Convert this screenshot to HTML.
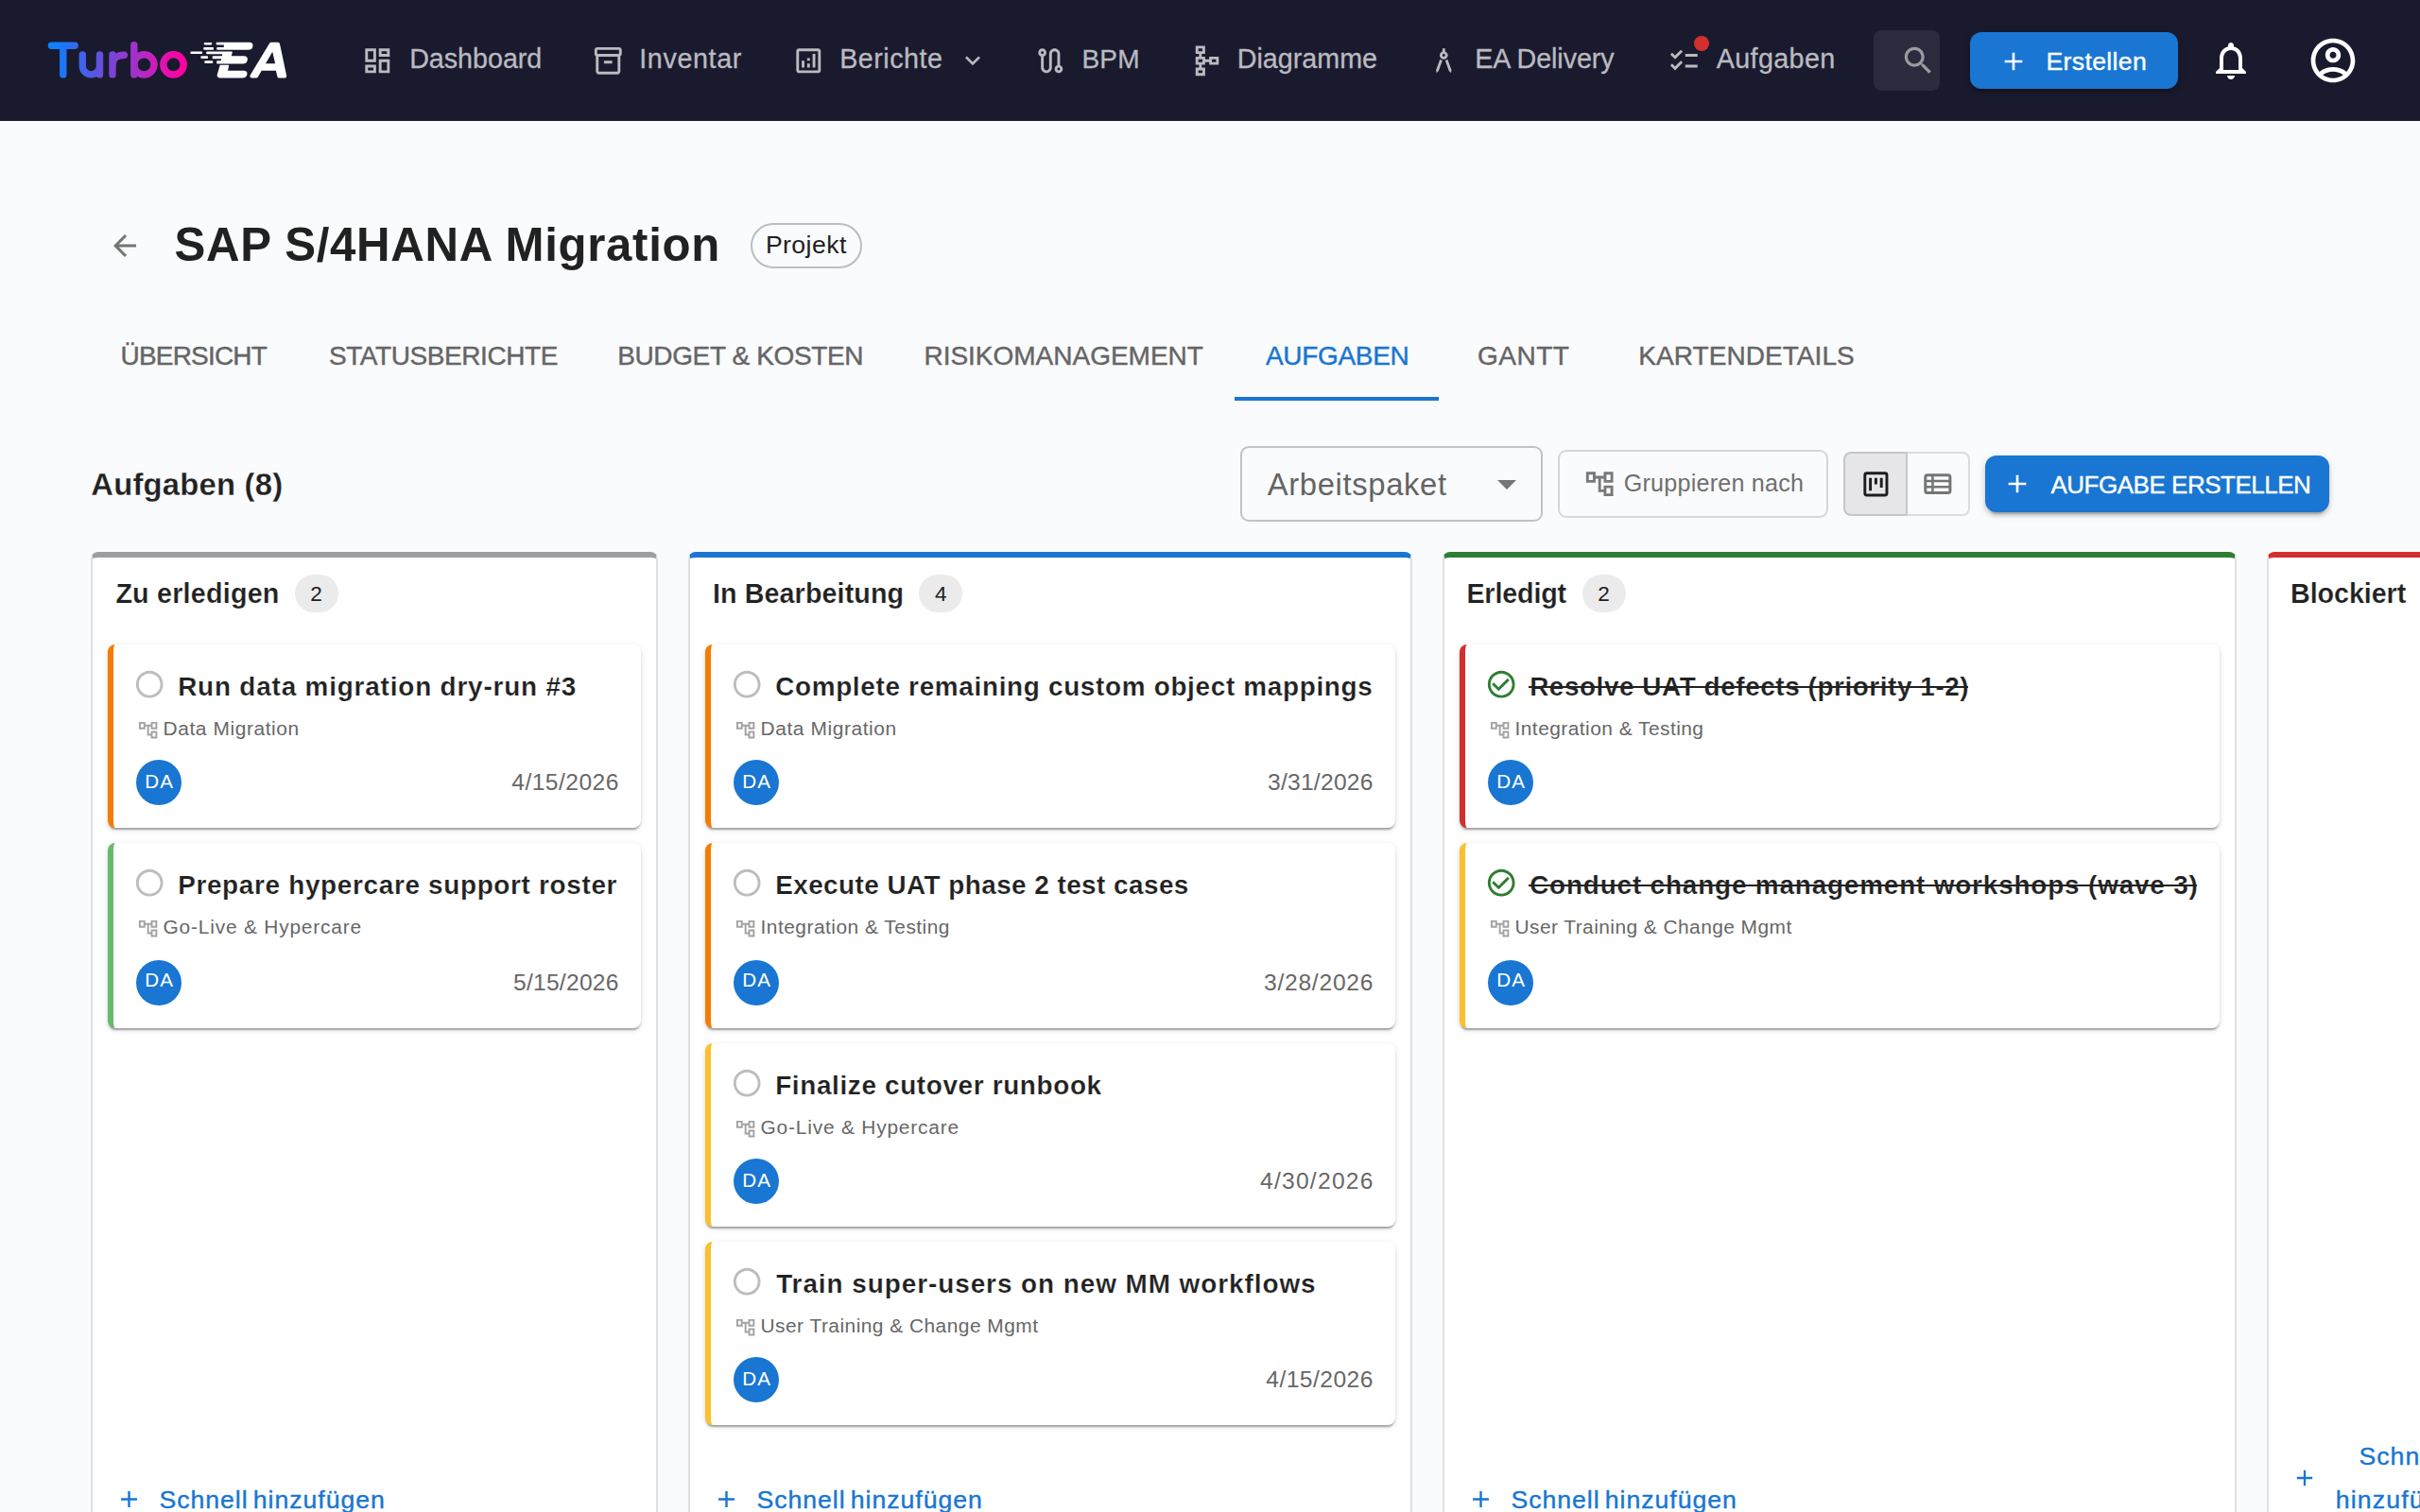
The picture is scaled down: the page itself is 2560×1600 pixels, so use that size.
<!DOCTYPE html>
<html lang="de"><head><meta charset="utf-8"><title>SAP S/4HANA Migration – Aufgaben</title>
<style>
*{box-sizing:border-box;margin:0;padding:0}
html,body{width:2560px;height:1600px;overflow:hidden;background:#fafbfc}
@media (max-width:1400px){html{zoom:.5}}
body{font-family:"Liberation Sans",sans-serif;position:relative;-webkit-font-smoothing:antialiased}
h1,h2,h3{font-size:inherit;font-weight:inherit;display:contents}
main,section,nav.tabs{display:contents}
.t{position:absolute;white-space:pre;line-height:1;display:block}
.ic{position:absolute;display:block;overflow:visible}
.nav{position:absolute;left:0;top:0;width:2560px;height:128px;background:#1a1a2e}
.logo{position:absolute;left:40px;top:30px}
.dot{position:absolute;left:1792px;top:38px;width:16px;height:16px;border-radius:50%;background:#d32f2f}
.search{position:absolute;left:1982px;top:32px;width:70px;height:64px;border-radius:8px;background:#2b2b3d}
.btn-create{position:absolute;left:2084px;top:34px;width:220px;height:60px;border-radius:12px;background:#1976d2;box-shadow:0 6px 2px -4px rgba(0,0,0,.2),0 4px 4px 0 rgba(0,0,0,.14),0 2px 10px 0 rgba(0,0,0,.12)}
.chip{position:absolute;left:794px;top:236px;width:118px;height:48px;border-radius:24px;border:2px solid #bdbdbd}
.indicator{position:absolute;left:1306px;top:420px;width:216px;height:4px;background:#1976d2}
.select{position:absolute;left:1312px;top:472px;width:320px;height:80px;border:2px solid #c2c2c3;border-radius:9px}
.btn-group{position:absolute;left:1648px;top:476px;width:286px;height:72px;border:2px solid #d6d6d7;border-radius:9px}
.toggle{position:absolute;left:1950px;top:478px;width:134px;height:68px}
.tg1{position:absolute;left:0;top:0;width:68px;height:68px;border:2px solid #c6c6c8;border-radius:8px 0 0 8px;background:#e6e6e8}
.tg2{position:absolute;left:66px;top:0;width:68px;height:68px;border:2px solid #dcdcdd;border-left-color:#c6c6c8;border-radius:0 8px 8px 0}
.btn-add{position:absolute;left:2100px;top:482px;width:364px;height:60px;border-radius:12px;background:#1976d2;box-shadow:0 6px 2px -4px rgba(0,0,0,.2),0 4px 4px 0 rgba(0,0,0,.14),0 2px 10px 0 rgba(0,0,0,.12)}
.col{position:absolute;top:584px;height:1100px;background:#fff;border:2px solid #e0e0e0;border-top-width:6px;border-top-style:solid;border-radius:8px}
.badge{position:absolute;top:608px;width:46px;height:40px;border-radius:20px;background:#ebebeb}
.card{position:absolute;background:#fff;border-left:6px solid;border-radius:8px;box-sizing:content-box;box-shadow:0 4px 2px -2px rgba(0,0,0,.2),0 2px 2px 0 rgba(0,0,0,.14),0 2px 6px 0 rgba(0,0,0,.12)}
.strike{position:absolute;height:2px;background:#212121}
.avatar{position:absolute;width:48px;height:48px;border-radius:50%;background:#1976d2}
</style></head>
<body>
<header class="nav">
<svg class="logo" viewBox="40 30 280 70" width="280" height="70">
<defs><linearGradient id="lg" gradientUnits="userSpaceOnUse" x1="52" y1="0" x2="198" y2="0">
<stop offset="0" stop-color="#0a84ff"/><stop offset=".12" stop-color="#1f74f6"/><stop offset=".45" stop-color="#7a44d6"/><stop offset=".68" stop-color="#b22ac4"/><stop offset=".9" stop-color="#f408a8"/><stop offset="1" stop-color="#ff009c"/></linearGradient></defs>
<g fill="none" stroke="url(#lg)" stroke-width="7.4" stroke-linecap="round" stroke-linejoin="round">
<path d="M54.4 48.3H79.2M66.8 48.3V78.9"/>
<path d="M87.3 57.9V69.8a9.1 9.1 0 0 0 18.2 0V57.9M105.5 57.9V78.9"/>
<path d="M119 57.9V78.9M119 69.5C119 62 123.5 58.3 131.4 58.3"/>
<path d="M141.8 47.7V78.9"/><circle cx="152.4" cy="68.35" r="10.6"/>
<circle cx="183.5" cy="68.35" r="10.7"/>
</g>
<g fill="#fff" stroke="#fff" stroke-width="1.6" stroke-linejoin="round" stroke-linecap="round">
<!-- E -->
<path d="M238 45.5H263.5Q267.2 45.5 266.6 48.8Q266 52 262.6 52H230V50.7H237.6V46.8H229.5V45.5Z"/>
<path d="M219 55.4H245L243.6 60.1H258Q261.6 60.1 261 63.4Q260.4 66.7 257 66.7H230V65.1H234.5L235 61.4H225.5V60.1H235.6L236 56.4H219Z"/>
<path d="M233.4 69.5H241.4L240 75.5H257.5Q261.2 75.5 260.6 78.7Q260 81.8 256.5 81.8H233Q230 81.8 230.6 78.9Z"/>
<!-- dashes -->
<path d="M216.6 45.7H223.4V46.6H216.6ZM216.1 50.7H225.2V52H216.1ZM202.2 55.4H213.3V56.3H202.2ZM213.2 60.1H219.2V61.2H213.2ZM217.1 65.1H224.4V66.2H217.1Z"/>
</g>
<!-- A -->
<path fill="#fff" stroke="#fff" stroke-width="4" stroke-linejoin="round" fill-rule="evenodd" d="M286.85 46.7H294L301.2 80.6H295.3L293.5 72.7H275.6L271.1 80.6H266.4ZM289 49.5L277.5 69.2H293.7Z"/>
</svg>
<svg class="ic" style="left:381.70px;top:46.60px;width:34.6px;height:34.6px;fill:#babac0;" viewBox="0 0 24 24"><path d="M19 5v2h-4V5h4M9 5v6H5V5h4m10 8v6h-4v-6h4M9 17v2H5v-2h4M21 3h-8v6h8V3zM11 3H3v10h8V3zm10 8h-8v10h8V11zm-10 4H3v6h8v-6z"/></svg>
<span class="t" style="left:433.15px;top:48.00px;font-size:28.7px;font-weight:400;color:#babac0;letter-spacing:-0.023px;-webkit-text-stroke:0.3px #babac0;">Dashboard</span>
<svg class="ic" style="left:625.70px;top:46.60px;width:34.6px;height:34.6px;fill:#babac0;" viewBox="0 0 24 24"><path d="M20 2H4c-1 0-2 .9-2 2v3.01c0 .72.43 1.34 1 1.69V20c0 1.1 1.1 2 2 2h14c.9 0 2-.9 2-2V8.7c.57-.35 1-.97 1-1.69V4c0-1.1-1-2-2-2zm-1 18H5V9h14v11zm1-13H4V4h16v3zM9 12h6v2H9z"/></svg>
<span class="t" style="left:676.15px;top:48.00px;font-size:28.7px;font-weight:400;color:#babac0;letter-spacing:0.657px;-webkit-text-stroke:0.3px #babac0;">Inventar</span>
<svg class="ic" style="left:837.70px;top:46.60px;width:34.6px;height:34.6px;fill:#babac0;" viewBox="0 0 24 24"><path d="M19 3H5c-1.1 0-2 .9-2 2v14c0 1.1.9 2 2 2h14c1.1 0 2-.9 2-2V5c0-1.1-.9-2-2-2zm0 16H5V5h14v14zM7 12h2v5H7zm8-5h2v10h-2zm-4 7h2v3h-2zm0-4h2v2h-2z"/></svg>
<span class="t" style="left:888.15px;top:48.00px;font-size:28.7px;font-weight:400;color:#babac0;letter-spacing:0.524px;-webkit-text-stroke:0.3px #babac0;">Berichte</span>
<svg class="ic" style="left:1093.90px;top:46.60px;width:34.6px;height:34.6px;fill:#babac0;" viewBox="0 0 24 24"><path d="M19 15.18V7c0-2.21-1.79-4-4-4s-4 1.79-4 4v10c0 1.1-.9 2-2 2s-2-.9-2-2V8.82C8.16 8.4 9 7.3 9 6c0-1.66-1.34-3-3-3S3 4.34 3 6c0 1.3.84 2.4 2 2.82V17c0 2.21 1.79 4 4 4s4-1.79 4-4V7c0-1.1.9-2 2-2s2 .9 2 2v8.18c-1.16.41-2 1.51-2 2.82 0 1.66 1.34 3 3 3s3-1.34 3-3c0-1.3-.84-2.4-2-2.82zM6 7c-.55 0-1-.45-1-1s.45-1 1-1 1 .45 1 1-.45 1-1 1zm12 12c-.55 0-1-.45-1-1s.45-1 1-1 1 .45 1 1-.45 1-1 1z"/></svg>
<span class="t" style="left:1144.40px;top:49.00px;font-size:28.0px;font-weight:400;color:#babac0;letter-spacing:0.299px;-webkit-text-stroke:0.3px #babac0;">BPM</span>
<svg class="ic" style="left:1258.70px;top:46.60px;width:34.6px;height:34.6px;fill:#babac0;" viewBox="0 0 24 24"><path d="M14 9v2h-3V9H8.5V7H11V1H4v6h2.5v2H4v6h2.5v2H4v6h7v-6H8.5v-2H11v-2h3v2h7V9h-7zM6 3h3v2H6V3zm3 18H6v-2h3v2zm0-8H6v-2h3v2zm10 0h-3v-2h3v2z"/></svg>
<span class="t" style="left:1308.65px;top:48.00px;font-size:28.7px;font-weight:400;color:#babac0;letter-spacing:0.019px;-webkit-text-stroke:0.3px #babac0;">Diagramme</span>
<svg class="ic" style="left:1509.90px;top:46.60px;width:34.6px;height:34.6px;fill:#babac0;" viewBox="0 0 24 24"><path d="M6.36 18.78L6.61 21l1.62-1.54 2.77-7.6c-.68-.17-1.28-.51-1.77-.98l-2.87 7.9zm8.41-7.9c-.49.47-1.1.81-1.77.98l2.77 7.6L17.39 21l.26-2.22-2.88-7.9zM15 8c0-1.3-.84-2.4-2-2.82V3h-2v2.18C9.84 5.6 9 6.7 9 8c0 1.66 1.34 3 3 3s3-1.34 3-3zm-3 1c-.55 0-1-.45-1-1s.45-1 1-1 1 .45 1 1-.45 1-1 1z"/></svg>
<span class="t" style="left:1560.15px;top:48.00px;font-size:28.7px;font-weight:400;color:#babac0;letter-spacing:-0.081px;-webkit-text-stroke:0.3px #babac0;">EA Delivery</span>
<svg class="ic" style="left:1764.20px;top:46.60px;width:34.6px;height:34.6px;fill:#babac0;" viewBox="0 0 24 24"><path d="M22 7h-9v2h9V7zm0 8h-9v2h9v-2zM5.54 11L2 7.46l1.41-1.41 2.12 2.12 4.24-4.24 1.41 1.41L5.54 11zm0 8L2 15.46l1.41-1.41 2.12 2.12 4.24-4.24 1.41 1.41L5.54 19z"/></svg>
<span class="t" style="left:1815.65px;top:48.00px;font-size:28.7px;font-weight:400;color:#babac0;letter-spacing:0.403px;-webkit-text-stroke:0.3px #babac0;">Aufgaben</span>
<svg class="ic" style="left:1013.40px;top:48.00px;width:32px;height:32px;fill:#babac0;" viewBox="0 0 24 24"><path d="M16.59 8.59L12 13.17 7.41 8.59 6 10l6 6 6-6z"/></svg>
<div class="dot"></div>
<div class="search"></div>
<svg class="ic" style="left:2010.05px;top:44.55px;width:38.5px;height:38.5px;fill:#9a9aa0;" viewBox="0 0 24 24"><path d="M15.5 14h-.79l-.28-.27C15.41 12.59 16 11.11 16 9.5 16 5.91 13.09 3 9.5 3S3 5.91 3 9.5 5.91 16 9.5 16c1.61 0 3.09-.59 4.23-1.57l.27.28v.79l5 4.99L20.49 19l-4.99-5zm-6 0C7.01 14 5 11.99 5 9.5S7.01 5 9.5 5 14 7.01 14 9.5 11.99 14 9.5 14z"/></svg>
<div class="btn-create"></div>
<svg class="ic" style="left:2114.00px;top:48.60px;width:32px;height:32px;fill:#fff;" viewBox="0 0 24 24"><path d="M19 13h-6v6h-2v-6H5v-2h6V5h2v6h6v2z"/></svg>
<span class="t" style="left:2164.39px;top:52.00px;font-size:26.65px;font-weight:400;color:#fff;letter-spacing:0.347px;-webkit-text-stroke:0.39px #fff;">Erstellen</span>
<svg class="ic" style="left:2336.00px;top:40.00px;width:48px;height:48px;fill:#fff;" viewBox="0 0 24 24"><path d="M12 22c1.1 0 2-.9 2-2h-4c0 1.1.9 2 2 2zm6-6v-5c0-3.07-1.63-5.64-4.5-6.32V4c0-.83-.67-1.5-1.5-1.5s-1.5.67-1.5 1.5v.68C7.64 5.36 6 7.92 6 11v5l-2 2v1h16v-1l-2-2zm-2 1H8v-6c0-2.48 1.51-4.5 4-4.5s4 2.02 4 4.5v6z"/></svg>
<svg class="ic" style="left:2440.00px;top:36.00px;width:56px;height:56px;fill:#fff;" viewBox="0 0 24 24"><path d="M12 2C6.48 2 2 6.48 2 12s4.48 10 10 10 10-4.48 10-10S17.52 2 12 2zM7.35 18.5C8.66 17.56 10.26 17 12 17s3.34.56 4.65 1.5c-1.31.94-2.91 1.5-4.65 1.5s-3.34-.56-4.65-1.5zm10.79-1.38C16.45 15.8 14.32 15 12 15s-4.45.8-6.14 2.12C4.7 15.73 4 13.95 4 12c0-4.42 3.58-8 8-8s8 3.58 8 8c0 1.95-.7 3.73-1.86 5.12zM12 6c-1.93 0-3.5 1.57-3.5 3.5S10.07 13 12 13s3.5-1.57 3.5-3.5S13.93 6 12 6zm0 5c-.83 0-1.5-.67-1.5-1.5S11.17 8 12 8s1.5.67 1.5 1.5S12.83 11 12 11z"/></svg>
</header>
<main>
<svg class="ic" style="left:114.00px;top:242.00px;width:36px;height:36px;fill:#757575;" viewBox="0 0 24 24"><path d="M20 11H7.83l5.59-5.59L12 4l-8 8 8 8 1.41-1.41L7.83 13H20v-2z"/></svg>
<h1><span class="t" style="left:184.50px;top:234.00px;font-size:49.2px;font-weight:700;color:#212121;letter-spacing:0.692px;">SAP S/4HANA Migration</span></h1>
<div class="chip"></div>
<span class="t" style="left:809.90px;top:246.00px;font-size:26.65px;font-weight:400;color:#212121;letter-spacing:0.415px;">Projekt</span>
<nav class="tabs">
<span class="t" style="left:127.46px;top:363.00px;font-size:28.0px;font-weight:400;color:#656566;letter-spacing:-0.795px;-webkit-text-stroke:0.42px #656566;">ÜBERSICHT</span>
<span class="t" style="left:347.96px;top:363.00px;font-size:28.0px;font-weight:400;color:#656566;letter-spacing:-0.413px;-webkit-text-stroke:0.42px #656566;">STATUSBERICHTE</span>
<span class="t" style="left:653.21px;top:363.00px;font-size:28.0px;font-weight:400;color:#656566;letter-spacing:-0.374px;-webkit-text-stroke:0.42px #656566;">BUDGET &amp; KOSTEN</span>
<span class="t" style="left:977.46px;top:363.00px;font-size:28.0px;font-weight:400;color:#656566;letter-spacing:-0.010px;-webkit-text-stroke:0.42px #656566;">RISIKOMANAGEMENT</span>
<span class="t" style="left:1338.96px;top:363.00px;font-size:28.0px;font-weight:400;color:#1976d2;letter-spacing:-0.318px;-webkit-text-stroke:0.42px #1976d2;">AUFGABEN</span>
<span class="t" style="left:1562.96px;top:363.00px;font-size:28.0px;font-weight:400;color:#656566;letter-spacing:0.513px;-webkit-text-stroke:0.42px #656566;">GANTT</span>
<span class="t" style="left:1733.21px;top:363.00px;font-size:28.0px;font-weight:400;color:#656566;letter-spacing:0.068px;-webkit-text-stroke:0.42px #656566;">KARTENDETAILS</span>
<div class="indicator"></div></nav>
<section class="toolbar">
<h2><span class="t" style="left:96.27px;top:497.00px;font-size:32.8px;font-weight:700;color:#212121;letter-spacing:0.215px;-webkit-text-stroke:0.26px #fafbfc;">Aufgaben (8)</span></h2>
<div class="select"></div>
<span class="t" style="left:1340.70px;top:497.00px;font-size:32.8px;font-weight:400;color:#646465;letter-spacing:0.646px;">Arbeitspaket</span>
<svg class="ic" style="left:1583.7px;top:508px;width:20px;height:10px;fill:#757575" viewBox="0 0 20 10"><path d="M0 0h20L10 10z"/></svg>
<div class="btn-group"></div>
<svg class="ic" style="left:1674.60px;top:494.80px;width:34.4px;height:34.4px;fill:#787878;" viewBox="0 0 24 24"><path d="M22 11V3h-7v3H9V3H2v8h7V8h2v10h4v3h7v-8h-7v3h-2V8h2v3h7zM7 9H4V5h3v4zm10 6h3v4h-3v-4zm0-10h3v4h-3V5z"/></svg>
<span class="t" style="left:1717.75px;top:499.00px;font-size:25.11px;font-weight:400;color:#6f6f70;letter-spacing:0.226px;">Gruppieren nach</span>
<div class="toggle"><div class="tg1"></div><div class="tg2"></div></div>
<svg class="ic" style="left:1966.6px;top:494.6px;width:34.8px;height:34.8px" viewBox="0 0 24 24"><rect x="4" y="4" width="16" height="16" rx="1.4" fill="none" stroke="#1c1c1c" stroke-width="2"/><path fill="#1c1c1c" d="M7 7.4h2v9.4H7zM11 7.4h2v4.6h-2zM15 7.4h2v7h-2z"/></svg>
<svg class="ic" style="left:2032px;top:494px;width:36px;height:36px" viewBox="0 0 24 24"><rect x="3.2" y="5.8" width="17.4" height="12.6" rx="1.4" fill="none" stroke="#757575" stroke-width="2"/><path fill="none" stroke="#757575" stroke-width="1.7" d="M3 10H21M3 14.2H21M8.3 5.5V18.7"/></svg>
<div class="btn-add"></div>
<svg class="ic" style="left:2118.40px;top:496.30px;width:32px;height:32px;fill:#fff;" viewBox="0 0 24 24"><path d="M19 13h-6v6h-2v-6H5v-2h6V5h2v6h6v2z"/></svg>
<span class="t" style="left:2169.45px;top:500.00px;font-size:26.0px;font-weight:400;color:#fff;letter-spacing:-0.485px;-webkit-text-stroke:0.39px #fff;">AUFGABE ERSTELLEN</span>
</section>
<section class="board">
<div class="col" style="left:96px;width:600px;border-top-color:#9e9e9e"></div>
<h3><span class="t" style="left:122.39px;top:614.00px;font-size:28.7px;font-weight:700;color:#212121;letter-spacing:0.222px;-webkit-text-stroke:0.22px #fff;">Zu erledigen</span></h3>
<div class="badge" style="left:312px"></div>
<span class="t" style="left:328.20px;top:618.00px;font-size:22.55px;font-weight:400;color:#212121;letter-spacing:0.800px;">2</span>
<article class="card" style="left:114px;top:682px;width:558px;height:194px;border-left-color:#f57c00"></article>
<svg class="ic" style="left:140.80px;top:706.70px;width:34.4px;height:34.4px;fill:#bdbdbd;" viewBox="0 0 24 24"><path d="M12 2C6.48 2 2 6.48 2 12s4.48 10 10 10 10-4.48 10-10S17.52 2 12 2zm0 18c-4.42 0-8-3.58-8-8s3.58-8 8-8 8 3.58 8 8-3.58 8-8 8z"/></svg>
<span class="t" style="left:188.14px;top:713.00px;font-size:27.88px;font-weight:700;color:#212121;letter-spacing:0.828px;-webkit-text-stroke:0.22px #fff;">Run data migration dry-run #3</span>
<svg class="ic" style="left:144.85px;top:760.65px;width:23.3px;height:23.3px;fill:#a3a3a3;" viewBox="0 0 24 24"><path d="M22 11V3h-7v3H9V3H2v8h7V8h2v10h4v3h7v-8h-7v3h-2V8h2v3h7zM7 9H4V5h3v4zm10 6h3v4h-3v-4zm0-10h3v4h-3V5z"/></svg>
<span class="t" style="left:172.50px;top:761.00px;font-size:20.91px;font-weight:400;color:#676767;letter-spacing:0.590px;">Data Migration</span>
<div class="avatar" style="left:144px;top:804px"></div>
<span class="t" style="left:153.25px;top:817.00px;font-size:20.6px;font-weight:400;color:#fff;letter-spacing:1.128px;">DA</span>
<span class="t" style="left:541.25px;top:816.00px;font-size:24.6px;font-weight:400;color:#676767;letter-spacing:0.471px;">4/15/2026</span>
<article class="card" style="left:114px;top:892px;width:558px;height:196px;border-left-color:#66bb6a"></article>
<svg class="ic" style="left:140.80px;top:916.70px;width:34.4px;height:34.4px;fill:#bdbdbd;" viewBox="0 0 24 24"><path d="M12 2C6.48 2 2 6.48 2 12s4.48 10 10 10 10-4.48 10-10S17.52 2 12 2zm0 18c-4.42 0-8-3.58-8-8s3.58-8 8-8 8 3.58 8 8-3.58 8-8 8z"/></svg>
<span class="t" style="left:188.14px;top:923.00px;font-size:27.88px;font-weight:700;color:#212121;letter-spacing:0.685px;-webkit-text-stroke:0.22px #fff;">Prepare hypercare support roster</span>
<svg class="ic" style="left:144.85px;top:970.65px;width:23.3px;height:23.3px;fill:#a3a3a3;" viewBox="0 0 24 24"><path d="M22 11V3h-7v3H9V3H2v8h7V8h2v10h4v3h7v-8h-7v3h-2V8h2v3h7zM7 9H4V5h3v4zm10 6h3v4h-3v-4zm0-10h3v4h-3V5z"/></svg>
<span class="t" style="left:172.50px;top:971.00px;font-size:20.91px;font-weight:400;color:#676767;letter-spacing:0.802px;">Go-Live &amp; Hypercare</span>
<div class="avatar" style="left:144px;top:1016px"></div>
<span class="t" style="left:153.25px;top:1027.00px;font-size:20.6px;font-weight:400;color:#fff;letter-spacing:1.128px;">DA</span>
<span class="t" style="left:543.00px;top:1028.00px;font-size:24.6px;font-weight:400;color:#676767;letter-spacing:0.252px;">5/15/2026</span>
<svg class="ic" style="left:121.50px;top:1571.50px;width:29px;height:29px;fill:#1976d2;" viewBox="0 0 24 24"><path d="M19 13h-6v6h-2v-6H5v-2h6V5h2v6h6v2z"/></svg>
<span class="t" style="left:168.44px;top:1574.00px;font-size:26.65px;font-weight:400;color:#1976d2;letter-spacing:0.970px;word-spacing:-3.2px;-webkit-text-stroke:0.39px #1976d2;">Schnell hinzufügen</span>
<div class="col" style="left:728px;width:766px;border-top-color:#1976d2"></div>
<h3><span class="t" style="left:753.89px;top:614.00px;font-size:28.7px;font-weight:700;color:#212121;letter-spacing:0.109px;-webkit-text-stroke:0.22px #fff;">In Bearbeitung</span></h3>
<div class="badge" style="left:972px"></div>
<span class="t" style="left:989.10px;top:618.00px;font-size:22.55px;font-weight:400;color:#212121;letter-spacing:-0.200px;">4</span>
<article class="card" style="left:746px;top:682px;width:724px;height:194px;border-left-color:#f57c00"></article>
<svg class="ic" style="left:772.80px;top:706.70px;width:34.4px;height:34.4px;fill:#bdbdbd;" viewBox="0 0 24 24"><path d="M12 2C6.48 2 2 6.48 2 12s4.48 10 10 10 10-4.48 10-10S17.52 2 12 2zm0 18c-4.42 0-8-3.58-8-8s3.58-8 8-8 8 3.58 8 8-3.58 8-8 8z"/></svg>
<span class="t" style="left:820.14px;top:713.00px;font-size:27.88px;font-weight:700;color:#212121;letter-spacing:0.691px;-webkit-text-stroke:0.22px #fff;">Complete remaining custom object mappings</span>
<svg class="ic" style="left:776.85px;top:760.65px;width:23.3px;height:23.3px;fill:#a3a3a3;" viewBox="0 0 24 24"><path d="M22 11V3h-7v3H9V3H2v8h7V8h2v10h4v3h7v-8h-7v3h-2V8h2v3h7zM7 9H4V5h3v4zm10 6h3v4h-3v-4zm0-10h3v4h-3V5z"/></svg>
<span class="t" style="left:804.50px;top:761.00px;font-size:20.91px;font-weight:400;color:#676767;letter-spacing:0.590px;">Data Migration</span>
<div class="avatar" style="left:776px;top:804px"></div>
<span class="t" style="left:785.25px;top:817.00px;font-size:20.6px;font-weight:400;color:#fff;letter-spacing:1.128px;">DA</span>
<span class="t" style="left:1341.00px;top:816.00px;font-size:24.6px;font-weight:400;color:#676767;letter-spacing:0.252px;">3/31/2026</span>
<article class="card" style="left:746px;top:892px;width:724px;height:196px;border-left-color:#f57c00"></article>
<svg class="ic" style="left:772.80px;top:916.70px;width:34.4px;height:34.4px;fill:#bdbdbd;" viewBox="0 0 24 24"><path d="M12 2C6.48 2 2 6.48 2 12s4.48 10 10 10 10-4.48 10-10S17.52 2 12 2zm0 18c-4.42 0-8-3.58-8-8s3.58-8 8-8 8 3.58 8 8-3.58 8-8 8z"/></svg>
<span class="t" style="left:820.14px;top:923.00px;font-size:27.88px;font-weight:700;color:#212121;letter-spacing:0.456px;-webkit-text-stroke:0.22px #fff;">Execute UAT phase 2 test cases</span>
<svg class="ic" style="left:776.85px;top:970.65px;width:23.3px;height:23.3px;fill:#a3a3a3;" viewBox="0 0 24 24"><path d="M22 11V3h-7v3H9V3H2v8h7V8h2v10h4v3h7v-8h-7v3h-2V8h2v3h7zM7 9H4V5h3v4zm10 6h3v4h-3v-4zm0-10h3v4h-3V5z"/></svg>
<span class="t" style="left:804.50px;top:971.00px;font-size:20.91px;font-weight:400;color:#676767;letter-spacing:0.489px;">Integration &amp; Testing</span>
<div class="avatar" style="left:776px;top:1016px"></div>
<span class="t" style="left:785.25px;top:1027.00px;font-size:20.6px;font-weight:400;color:#fff;letter-spacing:1.128px;">DA</span>
<span class="t" style="left:1337.00px;top:1028.00px;font-size:24.6px;font-weight:400;color:#676767;letter-spacing:0.752px;">3/28/2026</span>
<article class="card" style="left:746px;top:1104px;width:724px;height:194px;border-left-color:#fbc02d"></article>
<svg class="ic" style="left:772.80px;top:1128.70px;width:34.4px;height:34.4px;fill:#bdbdbd;" viewBox="0 0 24 24"><path d="M12 2C6.48 2 2 6.48 2 12s4.48 10 10 10 10-4.48 10-10S17.52 2 12 2zm0 18c-4.42 0-8-3.58-8-8s3.58-8 8-8 8 3.58 8 8-3.58 8-8 8z"/></svg>
<span class="t" style="left:820.14px;top:1135.00px;font-size:27.88px;font-weight:700;color:#212121;letter-spacing:0.655px;-webkit-text-stroke:0.22px #fff;">Finalize cutover runbook</span>
<svg class="ic" style="left:776.85px;top:1182.65px;width:23.3px;height:23.3px;fill:#a3a3a3;" viewBox="0 0 24 24"><path d="M22 11V3h-7v3H9V3H2v8h7V8h2v10h4v3h7v-8h-7v3h-2V8h2v3h7zM7 9H4V5h3v4zm10 6h3v4h-3v-4zm0-10h3v4h-3V5z"/></svg>
<span class="t" style="left:804.50px;top:1183.00px;font-size:20.91px;font-weight:400;color:#676767;letter-spacing:0.802px;">Go-Live &amp; Hypercare</span>
<div class="avatar" style="left:776px;top:1226px"></div>
<span class="t" style="left:785.25px;top:1239.00px;font-size:20.6px;font-weight:400;color:#fff;letter-spacing:1.128px;">DA</span>
<span class="t" style="left:1333.00px;top:1238.00px;font-size:24.6px;font-weight:400;color:#676767;letter-spacing:1.252px;">4/30/2026</span>
<article class="card" style="left:746px;top:1314px;width:724px;height:194px;border-left-color:#fbc02d"></article>
<svg class="ic" style="left:772.80px;top:1338.70px;width:34.4px;height:34.4px;fill:#bdbdbd;" viewBox="0 0 24 24"><path d="M12 2C6.48 2 2 6.48 2 12s4.48 10 10 10 10-4.48 10-10S17.52 2 12 2zm0 18c-4.42 0-8-3.58-8-8s3.58-8 8-8 8 3.58 8 8-3.58 8-8 8z"/></svg>
<span class="t" style="left:821.14px;top:1345.00px;font-size:27.88px;font-weight:700;color:#212121;letter-spacing:0.960px;-webkit-text-stroke:0.22px #fff;">Train super-users on new MM workflows</span>
<svg class="ic" style="left:776.85px;top:1392.65px;width:23.3px;height:23.3px;fill:#a3a3a3;" viewBox="0 0 24 24"><path d="M22 11V3h-7v3H9V3H2v8h7V8h2v10h4v3h7v-8h-7v3h-2V8h2v3h7zM7 9H4V5h3v4zm10 6h3v4h-3v-4zm0-10h3v4h-3V5z"/></svg>
<span class="t" style="left:804.50px;top:1393.00px;font-size:20.91px;font-weight:400;color:#676767;letter-spacing:0.471px;">User Training &amp; Change Mgmt</span>
<div class="avatar" style="left:776px;top:1436px"></div>
<span class="t" style="left:785.25px;top:1449.00px;font-size:20.6px;font-weight:400;color:#fff;letter-spacing:1.128px;">DA</span>
<span class="t" style="left:1339.25px;top:1448.00px;font-size:24.6px;font-weight:400;color:#676767;letter-spacing:0.471px;">4/15/2026</span>
<svg class="ic" style="left:753.50px;top:1571.50px;width:29px;height:29px;fill:#1976d2;" viewBox="0 0 24 24"><path d="M19 13h-6v6h-2v-6H5v-2h6V5h2v6h6v2z"/></svg>
<span class="t" style="left:800.45px;top:1574.00px;font-size:26.65px;font-weight:400;color:#1976d2;letter-spacing:0.970px;word-spacing:-3.2px;-webkit-text-stroke:0.39px #1976d2;">Schnell hinzufügen</span>
<div class="col" style="left:1526px;width:840px;border-top-color:#2e7d32"></div>
<h3><span class="t" style="left:1551.39px;top:614.00px;font-size:28.7px;font-weight:700;color:#212121;letter-spacing:-0.146px;-webkit-text-stroke:0.22px #fff;">Erledigt</span></h3>
<div class="badge" style="left:1674px"></div>
<span class="t" style="left:1690.20px;top:618.00px;font-size:22.55px;font-weight:400;color:#212121;letter-spacing:0.800px;">2</span>
<article class="card" style="left:1544px;top:682px;width:798px;height:194px;border-left-color:#d32f2f"></article>
<svg class="ic" style="left:1570.80px;top:706.70px;width:34.4px;height:34.4px;fill:#2e7d32;" viewBox="0 0 24 24"><path d="M16.59 7.58L10 14.17l-3.59-3.58L5 12l5 5 8-8zM12 2C6.48 2 2 6.48 2 12s4.48 10 10 10 10-4.48 10-10S17.52 2 12 2zm0 18c-4.42 0-8-3.58-8-8s3.58-8 8-8 8 3.58 8 8-3.58 8-8 8z"/></svg>
<span class="t" style="left:1618.14px;top:713.00px;font-size:27.88px;font-weight:700;color:#212121;letter-spacing:0.573px;-webkit-text-stroke:0.22px #fff;">Resolve UAT defects (priority 1-2)</span>
<div class="strike" style="left:1617.00px;top:726px;width:465.20px"></div>
<svg class="ic" style="left:1574.85px;top:760.65px;width:23.3px;height:23.3px;fill:#a3a3a3;" viewBox="0 0 24 24"><path d="M22 11V3h-7v3H9V3H2v8h7V8h2v10h4v3h7v-8h-7v3h-2V8h2v3h7zM7 9H4V5h3v4zm10 6h3v4h-3v-4zm0-10h3v4h-3V5z"/></svg>
<span class="t" style="left:1602.50px;top:761.00px;font-size:20.91px;font-weight:400;color:#676767;letter-spacing:0.464px;">Integration &amp; Testing</span>
<div class="avatar" style="left:1574px;top:804px"></div>
<span class="t" style="left:1583.25px;top:817.00px;font-size:20.6px;font-weight:400;color:#fff;letter-spacing:1.128px;">DA</span>
<article class="card" style="left:1544px;top:892px;width:798px;height:196px;border-left-color:#fbc02d"></article>
<svg class="ic" style="left:1570.80px;top:916.70px;width:34.4px;height:34.4px;fill:#2e7d32;" viewBox="0 0 24 24"><path d="M16.59 7.58L10 14.17l-3.59-3.58L5 12l5 5 8-8zM12 2C6.48 2 2 6.48 2 12s4.48 10 10 10 10-4.48 10-10S17.52 2 12 2zm0 18c-4.42 0-8-3.58-8-8s3.58-8 8-8 8 3.58 8 8-3.58 8-8 8z"/></svg>
<span class="t" style="left:1618.14px;top:923.00px;font-size:27.88px;font-weight:700;color:#212121;letter-spacing:0.839px;-webkit-text-stroke:0.22px #fff;">Conduct change management workshops (wave 3)</span>
<div class="strike" style="left:1617.00px;top:936px;width:707.45px"></div>
<svg class="ic" style="left:1574.85px;top:970.65px;width:23.3px;height:23.3px;fill:#a3a3a3;" viewBox="0 0 24 24"><path d="M22 11V3h-7v3H9V3H2v8h7V8h2v10h4v3h7v-8h-7v3h-2V8h2v3h7zM7 9H4V5h3v4zm10 6h3v4h-3v-4zm0-10h3v4h-3V5z"/></svg>
<span class="t" style="left:1602.50px;top:971.00px;font-size:20.91px;font-weight:400;color:#676767;letter-spacing:0.442px;">User Training &amp; Change Mgmt</span>
<div class="avatar" style="left:1574px;top:1016px"></div>
<span class="t" style="left:1583.25px;top:1027.00px;font-size:20.6px;font-weight:400;color:#fff;letter-spacing:1.128px;">DA</span>
<svg class="ic" style="left:1551.50px;top:1571.50px;width:29px;height:29px;fill:#1976d2;" viewBox="0 0 24 24"><path d="M19 13h-6v6h-2v-6H5v-2h6V5h2v6h6v2z"/></svg>
<span class="t" style="left:1598.44px;top:1574.00px;font-size:26.65px;font-weight:400;color:#1976d2;letter-spacing:0.970px;word-spacing:-3.2px;-webkit-text-stroke:0.39px #1976d2;">Schnell hinzufügen</span>
<div class="col" style="left:2398px;width:300px;border-top-color:#d32f2f"></div>
<h3><span class="t" style="left:2423.09px;top:614.00px;font-size:28.7px;font-weight:700;color:#212121;letter-spacing:-0.074px;-webkit-text-stroke:0.22px #fff;">Blockiert</span></h3>
<svg class="ic" style="left:2424.20px;top:1550.20px;width:28px;height:28px;fill:#1976d2;" viewBox="0 0 24 24"><path d="M19 13h-6v6h-2v-6H5v-2h6V5h2v6h6v2z"/></svg>
<span class="t" style="left:2495.60px;top:1528.00px;font-size:26.65px;font-weight:400;color:#1976d2;letter-spacing:0.959px;-webkit-text-stroke:0.39px #1976d2;">Schnell</span>
<span class="t" style="left:2470.80px;top:1574.00px;font-size:26.65px;font-weight:400;color:#1976d2;letter-spacing:1.164px;-webkit-text-stroke:0.39px #1976d2;">hinzufügen</span>
</section>
</main>
</body></html>
